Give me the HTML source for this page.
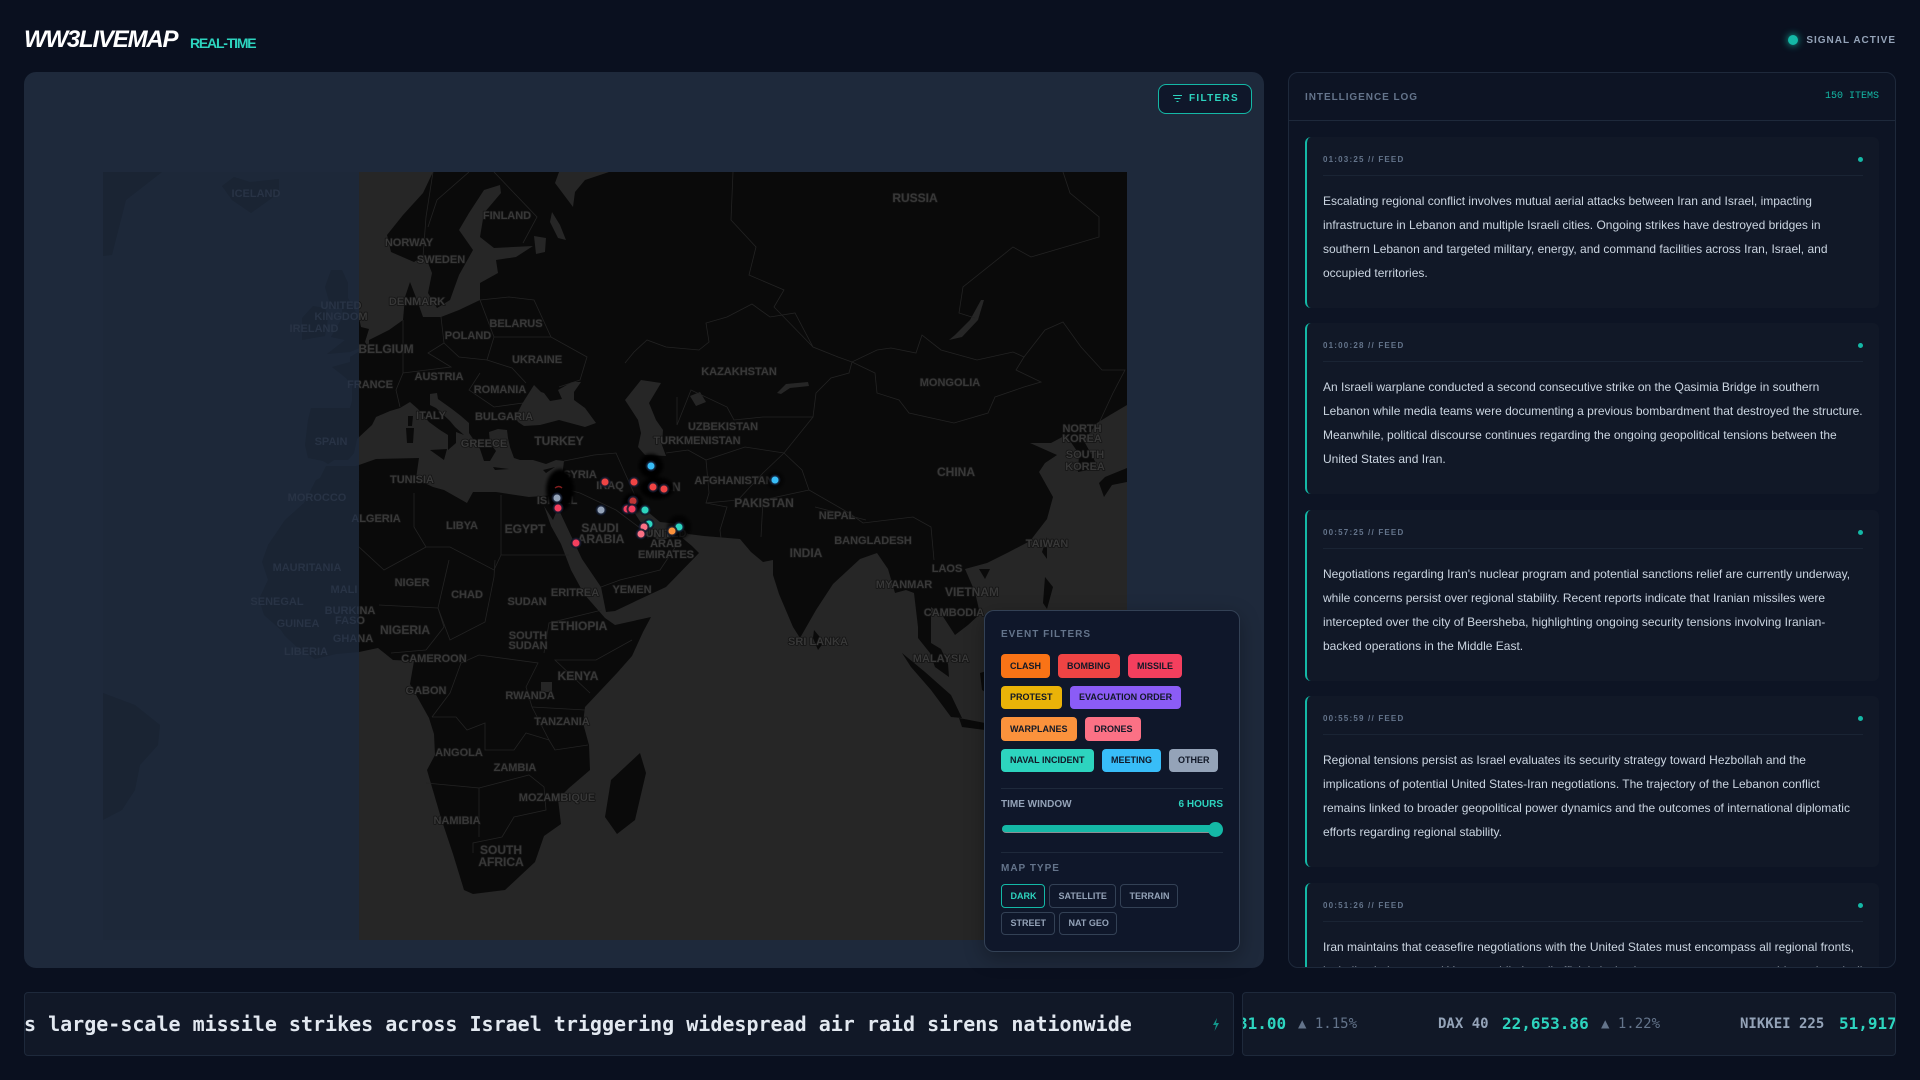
<!DOCTYPE html>
<html lang="en"><head><meta charset="utf-8"><title>WW3LIVEMAP</title>
<style>
*{box-sizing:border-box;margin:0;padding:0}
html,body{width:1920px;height:1080px;overflow:hidden;background:#0a101f;font-family:"Liberation Sans",sans-serif}
.a{position:absolute;white-space:nowrap}
#logo{left:24px;top:26px;font:italic bold 24px/28px "Liberation Sans",sans-serif;letter-spacing:-1.2px;color:#fff}
#rt{left:190px;top:35px;font:bold 14px/16px "Liberation Sans",sans-serif;letter-spacing:-1.2px;color:#2dd4bf}
#dot{left:1788px;top:35px;width:10px;height:10px;border-radius:50%;background:#14b8a6;box-shadow:0 0 8px #14b8a6}
#sig{right:24px;top:35px;font:bold 10px/12px "Liberation Sans",sans-serif;letter-spacing:1px;color:#94a3b8}
#map{left:24px;top:72px;width:1240px;height:896px;background:#1e293b;border-radius:12px;overflow:hidden}
#svg{position:absolute;left:0;top:0}
#fbtn{left:1158px;top:84px;width:94px;height:30px;border:1px solid #14b8a6;border-radius:8px;background:#0f172a;color:#2dd4bf;font:bold 10px/28px "Liberation Sans",sans-serif;letter-spacing:1.3px;padding-left:30px}
#panel{left:984px;top:610px;width:256px;height:342px;background:#0f172a;border:1px solid #334155;border-radius:10px;box-shadow:0 6px 20px rgba(0,0,0,.3)}
.h{font:bold 10px/12px "Liberation Sans",sans-serif;letter-spacing:1px;color:#64748b}
.c{position:absolute;border-radius:4px;font:bold 9px/1 "Liberation Sans",sans-serif;color:#111827;padding-left:9px;white-space:nowrap;display:flex;align-items:center}
.m{position:absolute;border:1px solid #334155;border-radius:4px;font:bold 9px/1 "Liberation Sans",sans-serif;color:#94a3b8;padding-left:8.5px;display:flex;align-items:center}
.d{position:absolute;left:1001px;width:222px;height:1px;background:#1e293b}
#log{left:1288px;top:72px;width:608px;height:896px;background:#0d1424;border:1px solid #1e293b;border-radius:10px;overflow:hidden}
#loghead{position:absolute;left:0;top:0;right:0;height:48px;border-bottom:1px solid #1e293b}
.card{position:absolute;left:16px;width:574px;height:170.5px;background:#111827;border-left:2px solid #14b8a6;border-radius:6px;overflow:hidden}
.meta{position:absolute;left:16px;top:18px;font:bold 8px/10px "Liberation Sans",sans-serif;letter-spacing:1.2px;color:#64748b;white-space:nowrap}
.rule{position:absolute;left:16px;top:38px;width:540px;height:1px;background:#1a2434}
.sd{position:absolute;left:551px;top:20px;width:5px;height:5px;border-radius:50%;background:#14b8a6}
.body{position:absolute;left:16px;top:52px;font:12px/24px "Liberation Sans",sans-serif;color:#cbd5e1;white-space:nowrap}
.box{background:#111827;border:1px solid #1e293b;border-radius:4px;overflow:hidden}
.mono{font-family:"DejaVu Sans Mono",monospace}
</style></head><body>
<div class="a" id="logo">WW3LIVEMAP</div><div class="a" id="rt">REAL-TIME</div>
<div class="a" id="dot"></div><div class="a" id="sig">SIGNAL ACTIVE</div>

<div class="a" id="map"></div>
<svg id="svg" width="1920" height="1080" viewBox="0 0 1920 1080" style="position:absolute;left:0;top:0">
<defs>
<clipPath id="cm"><rect x="359" y="172" width="768" height="768"/></clipPath>
<clipPath id="cl"><rect x="103" y="172" width="256" height="768"/></clipPath>
<filter id="bl" x="-50%" y="-50%" width="200%" height="200%"><feGaussianBlur stdDeviation="1.6"/></filter>
<g id="land">
<path d="M433,172 423,193 403,215 387,235 391,252 414,262 425,255 432,273 428,293 437,308 450,300 459,275 473,250 459,230 469,213 484,190 500,185 501,193 484,213 480,237 494,248 533,246 516,257 496,260 498,273 480,283 480,300 459,310 441,317 423,317 417,300 410,282 405,297 403,320 389,330 369,340 369,346 350,357 350,362 332,367 346,378 352,386 352,401 350,408 327,408 311,408 308,420 305,445 308,458 323,461 328,464 334,460 348,460 354,453 357,439 372,425 376,417 390,411 400,408 410,402 418,409 429,422 440,430 448,435 448,450 456,443 456,432 464,435 455,427 450,421 436,408 430,405 430,394 437,393 438,399 452,409 461,416 469,423 469,433 480,449 484,461 490,461 496,451 490,443 489,432 498,429 507,430 508,438 510,447 514,458 520,460 533,460 546,464 556,460 564,461 563,469 561,480 558,487 554,495 543,496 544,506 553,520 558,508 582,559 601,587 606,612 615,611 638,600 666,587 699,553 692,546 680,536 679,530 674,536 660,541 652,536 651,530 648,539 645,529 632,509 635,505 648,512 660,522 679,524 688,534 704,536 740,539 751,552 763,562 773,560 773,575 779,594 793,627 800,638 816,610 833,584 860,559 877,553 888,569 895,593 906,590 914,593 918,627 918,638 930,653 935,667 949,677 948,664 941,649 931,643 931,607 942,615 955,635 968,625 980,614 975,592 965,569 987,563 1009,552 1030,541 1047,519 1053,497 1039,472 1045,463 1057,455 1030,443 1051,443 1066,435 1079,454 1078,472 1093,469 1096,463 1084,441 1097,423 1110,415 1127,405 1140,400 1140,172Z"/>
<path d="M543,496 529,497 496,492 473,492 467,503 444,490 433,487 416,479 419,458 376,459 356,466 326,466 320,478 316,480 304,503 285,520 268,545 262,562 268,580 259,599 264,615 281,630 285,636 298,648 315,659 336,654 359,652 378,648 393,660 414,661 410,684 429,718 434,734 435,755 427,770 441,818 453,854 464,890 473,894 505,890 535,862 544,836 561,824 558,799 569,788 590,770 589,745 583,723 585,707 617,673 632,656 643,632 651,617 615,625 605,618 584,594 571,570 561,544 551,526 544,506Z"/>
<path d="M342,270 331,270 325,287 331,308 342,308 342,318 331,337 345,340 327,354 350,352 367,345 365,342 369,329 361,327 359,318 348,298 348,283Z"/>
<path d="M325,308 328,318 325,336 302,340 302,318 313,306Z"/>
<path d="M222,186 234,177 250,182 279,179 279,193 251,213 232,200Z"/>
<path d="M103,172 162,172 126,200 112,255 103,256Z"/>
<path d="M430,450 447,449 444,460Z M406,428 414,428 413,443 407,443Z M408,416 413,416 412,426 408,426Z M493,467 509,469 495,470Z M543,470 555,467 546,473Z"/>
<path d="M640,753 646,773 635,820 617,834 605,817 611,780Z"/>
<path d="M814,630 824,642 818,650 813,638Z"/>
<path d="M1105,477 1127,468 1127,482 1112,485 1104,497 1099,483Z"/>
<path d="M1047,537 1047,559 1042,552Z M979,569 990,569 985,579Z M1045,577 1053,587 1047,609 1043,603Z"/>
<path d="M902,653 925,672 951,695 962,718 951,717 931,690 911,667Z M959,718 985,723 985,730 962,727Z M980,673 990,670 990,695 982,690Z"/>
<path d="M103,693 135,705 160,725 158,745 140,765 135,790 122,810 103,820Z"/>
</g>
<g id="seas">
<path d="M515,417 518,412 522,404 534,385 541,392 544,393 550,401 562,399 558,390 572,382 581,382 574,392 574,400 585,408 596,423 585,427 559,420 540,425 524,426 518,422Z"/>
<path d="M641,380 661,383 649,403 656,420 663,430 662,445 666,456 645,455 638,447 641,433 638,420 625,400Z"/>
<path d="M559,172 555,183 573,207 575,192 585,180 609,172Z"/>
<path d="M949,340 962,337 978,320 984,300 981,300 970,320 955,335Z M777,393 786,384 808,382 809,386 790,388 781,394Z M541,682 552,682 552,692 541,692Z M534,236 546,238 545,252 536,254Z M552,212 560,225 566,240 558,238 550,222Z M690,396 700,392 706,402 696,406Z"/>
</g>
</defs>
<g clip-path="url(#cl)"><rect x="103" y="172" width="256" height="768" fill="#1d2839"/>
<use href="#land" fill="#1a2433"/></g>
<g clip-path="url(#cm)"><rect x="359" y="172" width="768" height="768" fill="#262626"/>
<use href="#land" fill="#0a0a0a"/><use href="#seas" fill="#262626"/>
<g fill="none" stroke="#232323" stroke-width=".8">
<path d="M625,363 634,352 647,340 666,347 699,350 709,342 706,323 727,317 752,304 770,317 795,313 813,347 838,357 852,362 877,350 891,348 916,353 922,335 941,350 977,360 1013,352 1024,357 1045,330 1063,322 1081,347 1102,370 1125,370 1113,393 1099,423"/>
<path d="M852,362 875,373 877,393 899,400 909,413 954,423 988,413 995,397 1024,387 1041,382 1016,370 1024,357"/>
<path d="M1063,172 1070,193 1099,217 1099,237 1031,257 1013,247 963,287 959,313 975,318"/>
<path d="M733,172 731,220 756,247 749,275 784,290 774,307 813,347"/>
<path d="M677,397 677,425 691,390 727,407 734,420 763,417 813,417 816,393 831,378 849,373 852,362"/>
<path d="M666,453 688,450 706,460 709,493 706,503 727,507 720,530 721,538"/>
<path d="M706,503 738,500 763,473 784,453 802,470 809,490 849,513 863,523 913,517 931,527 934,560"/>
<path d="M706,460 745,447 784,453 813,417"/><path d="M815,507 866,520"/><path d="M809,490 763,500 761,537"/>
<path d="M403,357 403,373 396,390 400,407"/><path d="M403,357 403,320"/>
<path d="M441,317 444,343 428,353 451,367 403,373"/><path d="M480,300 494,337 487,360 459,357 444,343"/>
<path d="M494,337 551,337 587,357 580,380 559,387"/><path d="M487,360 512,368 526,383"/>
<path d="M480,373 469,390 494,407 523,403"/><path d="M480,300 509,297 534,300 551,337"/>
<path d="M433,172 426,217 423,257"/><path d="M494,172 537,217 523,243"/><path d="M469,172 437,200 428,227"/>
<path d="M501,495 501,555 569,555"/><path d="M414,493 414,527 426,547 450,547 494,570 501,555"/>
<path d="M426,547 384,570 359,547 309,523 309,513 351,493 359,480"/>
<path d="M449,560 438,608 444,627 426,650"/><path d="M495,560 494,577 485,622 450,640 438,608"/>
<path d="M379,605 438,608"/><path d="M426,650 391,653"/><path d="M602,610 549,623 544,653"/>
<path d="M432,717 456,717 467,730 485,723 485,750 514,750 526,733 549,740 532,707 526,687 538,663 479,655 461,663 450,693 432,717"/>
<path d="M426,783 479,788 479,837"/><path d="M479,788 529,775 544,787 546,810 514,817 502,837 473,843 473,853"/>
<path d="M532,707 585,710"/><path d="M549,740 555,750 588,745"/><path d="M590,693 555,660 596,660 632,640"/>
<path d="M564,461 594,455 616,453 637,500"/><path d="M580,493 616,510 640,528"/><path d="M601,587 620,580 660,570 680,540"/>
<path d="M558,487 580,493"/>
</g></g>
<g font-family="'Liberation Sans',sans-serif" font-weight="700" font-size="11" text-anchor="middle">
<g clip-path="url(#cl)" fill="#283345">
<text x="256" y="197">ICELAND</text><text x="341" y="309">UNITED</text><text x="341" y="320">KINGDOM</text><text x="314" y="332">IRELAND</text><text x="386" y="353">BELGIUM</text><text x="370" y="388">FRANCE</text><text x="331" y="445">SPAIN</text><text x="317" y="501">MOROCCO</text><text x="376" y="522">ALGERIA</text><text x="307" y="571">MAURITANIA</text><text x="344" y="593">MALI</text><text x="277" y="605">SENEGAL</text><text x="350" y="614">BURKINA</text><text x="350" y="624">FASO</text><text x="298" y="627">GUINEA</text><text x="353" y="642">GHANA</text><text x="306" y="655">LIBERIA</text>
</g>
<g clip-path="url(#cm)" fill="#383838" stroke="#141414" stroke-width="1.6" paint-order="stroke" stroke-linejoin="round">
<text x="915" y="202" font-size="12">RUSSIA</text><text x="507" y="219">FINLAND</text><text x="409" y="246">NORWAY</text><text x="441" y="263">SWEDEN</text><text x="417" y="305">DENMARK</text><text x="341" y="309">UNITED</text><text x="341" y="320">KINGDOM</text><text x="468" y="339">POLAND</text><text x="516" y="327">BELARUS</text><text x="386" y="353" font-size="12">BELGIUM</text><text x="537" y="363">UKRAINE</text><text x="439" y="380">AUSTRIA</text><text x="370" y="388">FRANCE</text><text x="500" y="393">ROMANIA</text><text x="431" y="419">ITALY</text><text x="504" y="420">BULGARIA</text><text x="484" y="447">GREECE</text><text x="559" y="445" font-size="12">TURKEY</text><text x="580" y="478">SYRIA</text><text x="610" y="489">IRAQ</text><text x="412" y="483">TUNISIA</text><text x="557" y="504">ISRAEL</text><text x="376" y="522">ALGERIA</text><text x="462" y="529">LIBYA</text><text x="525" y="533" font-size="12">EGYPT</text><text x="600" y="532" font-size="12">SAUDI</text><text x="601" y="543" font-size="12">ARABIA</text><text x="739" y="375">KAZAKHSTAN</text><text x="950" y="386">MONGOLIA</text><text x="723" y="430">UZBEKISTAN</text><text x="697" y="444">TURKMENISTAN</text><text x="1082" y="432">NORTH</text><text x="1082" y="442">KOREA</text><text x="1085" y="458">SOUTH</text><text x="1085" y="470">KOREA</text><text x="956" y="476" font-size="12">CHINA</text><text x="734" y="484">AFGHANISTAN</text><text x="666" y="491" font-size="12">IRAN</text><text x="764" y="507" font-size="12">PAKISTAN</text><text x="837" y="519">NEPAL</text><text x="873" y="544">BANGLADESH</text><text x="1047" y="547">TAIWAN</text><text x="806" y="557" font-size="12">INDIA</text><text x="666" y="537">UNITED</text><text x="666" y="547">ARAB</text><text x="666" y="558">EMIRATES</text><text x="947" y="572">LAOS</text><text x="412" y="586">NIGER</text><text x="904" y="588">MYANMAR</text><text x="467" y="598">CHAD</text><text x="575" y="596">ERITREA</text><text x="632" y="593">YEMEN</text><text x="972" y="596" font-size="12">VIETNAM</text><text x="527" y="605">SUDAN</text><text x="350" y="614">BURKINA</text><text x="350" y="624">FASO</text><text x="954" y="616">CAMBODIA</text><text x="579" y="630" font-size="12">ETHIOPIA</text><text x="405" y="634" font-size="12">NIGERIA</text><text x="528" y="639">SOUTH</text><text x="528" y="649">SUDAN</text><text x="353" y="642">GHANA</text><text x="818" y="645">SRI LANKA</text><text x="434" y="662">CAMEROON</text><text x="941" y="662">MALAYSIA</text><text x="578" y="680" font-size="12">KENYA</text><text x="426" y="694">GABON</text><text x="530" y="699">RWANDA</text><text x="562" y="725">TANZANIA</text><text x="459" y="756">ANGOLA</text><text x="515" y="771">ZAMBIA</text><text x="557" y="801">MOZAMBIQUE</text><text x="457" y="824">NAMIBIA</text><text x="501" y="854" font-size="12">SOUTH</text><text x="501" y="866" font-size="12">AFRICA</text>
</g></g>
<g filter="url(#bl)" fill="#000">
<ellipse cx="560" cy="490" rx="14" ry="21" /><circle cx="651" cy="466" r="12"/><ellipse cx="657" cy="488" rx="17" ry="11"/><circle cx="633" cy="503" r="10"/><circle cx="679" cy="527" r="12" fill-opacity=".7"/><circle cx="775" cy="480" r="9" fill-opacity=".5"/>
</g>
<path d="M555,488q4,-3 7,0" stroke="#7f1d1d" stroke-width="1.4" fill="none"/>
<g stroke="#0f172a" stroke-opacity=".85" stroke-width="2">
<circle cx="633" cy="501" r="4.5" fill="#ef4444" fill-opacity=".8"/><circle cx="627" cy="509" r="4.5" fill="#f43f5e"/>
<circle cx="605" cy="482" r="4.5" fill="#ef4444"/><circle cx="634" cy="482" r="4.5" fill="#ef4444"/><circle cx="653" cy="487" r="4.5" fill="#ef4444"/><circle cx="664" cy="489" r="4.5" fill="#ef4444"/>
<circle cx="651" cy="466" r="4.5" fill="#38bdf8"/><circle cx="775" cy="480" r="4.5" fill="#38bdf8"/>
<circle cx="557" cy="498" r="4.5" fill="#94a3b8"/><circle cx="601" cy="510" r="4.5" fill="#94a3b8"/>
<circle cx="558" cy="508" r="4.5" fill="#f43f5e"/><circle cx="576" cy="543" r="4.5" fill="#f43f5e"/><circle cx="632" cy="509" r="4.5" fill="#f43f5e"/>
<circle cx="645" cy="510" r="4.5" fill="#2dd4bf"/><circle cx="649" cy="524" r="4.5" fill="#2dd4bf"/><circle cx="679" cy="527" r="4.5" fill="#2dd4bf"/>
<circle cx="644" cy="527" r="4.5" fill="#fb7185"/><circle cx="641" cy="534" r="4.5" fill="#fb7185"/><circle cx="672" cy="531" r="4.5" fill="#fb923c"/>
</g>
</svg>

<div class="a" id="fbtn">FILTERS</div>
<svg class="a" style="left:1172px;top:94px" width="11" height="9" viewBox="0 0 11 9"><path d="M1,1.5H10M2.5,4.5H8.5M4.5,7.5H6.5" stroke="#2dd4bf" stroke-width="1.1" fill="none"/></svg>

<div class="a" id="panel"></div>
<div class="a h" style="left:1001px;top:629px">EVENT FILTERS</div>
<div class="c" style="left:1001px;top:654px;width:49px;height:24px;background:#f97316">CLASH</div>
<div class="c" style="left:1058px;top:654px;width:62px;height:24px;background:#ef4444">BOMBING</div>
<div class="c" style="left:1128px;top:654px;width:54px;height:24px;background:#f43f5e">MISSILE</div>
<div class="c" style="left:1001px;top:686px;width:61px;height:23px;background:#eab308">PROTEST</div>
<div class="c" style="left:1070px;top:686px;width:111px;height:23px;background:#8b5cf6">EVACUATION ORDER</div>
<div class="c" style="left:1001px;top:717px;width:76px;height:24px;background:#fb923c">WARPLANES</div>
<div class="c" style="left:1085px;top:717px;width:56px;height:24px;background:#fb7185">DRONES</div>
<div class="c" style="left:1001px;top:749px;width:93px;height:23px;background:#2dd4bf">NAVAL INCIDENT</div>
<div class="c" style="left:1102px;top:749px;width:59px;height:23px;background:#38bdf8">MEETING</div>
<div class="c" style="left:1169px;top:749px;width:49px;height:23px;background:#94a3b8">OTHER</div>
<div class="d" style="top:788px"></div>
<div class="a" style="left:1001px;top:799px;font:bold 10px/12px 'Liberation Sans',sans-serif;color:#94a3b8">TIME WINDOW</div>
<div class="a" style="right:697px;top:799px;font:bold 10px/12px 'Liberation Sans',sans-serif;color:#2dd4bf">6 HOURS</div>
<div class="a" style="left:1002px;top:825px;width:218px;height:8px;border-radius:4px;background:#14b8a6;border-bottom:1px solid #8b8f94"></div>
<div class="a" style="left:1208px;top:822px;width:15px;height:15px;border-radius:50%;background:#14b8a6"></div>
<div class="d" style="top:852px"></div>
<div class="a h" style="left:1001px;top:863px">MAP TYPE</div>
<div class="m" style="left:1001px;top:884px;width:44px;height:24px;border-color:#14b8a6;color:#2dd4bf">DARK</div>
<div class="m" style="left:1049px;top:884px;width:67px;height:24px">SATELLITE</div>
<div class="m" style="left:1120px;top:884px;width:58px;height:24px">TERRAIN</div>
<div class="m" style="left:1001px;top:912px;width:54px;height:23px">STREET</div>
<div class="m" style="left:1059px;top:912px;width:58px;height:23px">NAT GEO</div>

<div class="a" id="log">
<div id="loghead"></div>
<div class="a h" style="left:16px;top:19px;letter-spacing:.95px">INTELLIGENCE LOG</div>
<div class="a" style="right:16px;top:18px;font:10px/12px 'Liberation Mono',monospace;color:#14b8a6">150 ITEMS</div>
<div class="card" style="top:64px"><div class="meta">01:03:25 // FEED</div><div class="sd"></div><div class="rule"></div>
<div class="body">Escalating regional conflict involves mutual aerial attacks between Iran and Israel, impacting<br>infrastructure in Lebanon and multiple Israeli cities. Ongoing strikes have destroyed bridges in<br>southern Lebanon and targeted military, energy, and command facilities across Iran, Israel, and<br>occupied territories.</div></div>
<div class="card" style="top:250px"><div class="meta">01:00:28 // FEED</div><div class="sd"></div><div class="rule"></div>
<div class="body">An Israeli warplane conducted a second consecutive strike on the Qasimia Bridge in southern<br>Lebanon while media teams were documenting a previous bombardment that destroyed the structure.<br>Meanwhile, political discourse continues regarding the ongoing geopolitical tensions between the<br>United States and Iran.</div></div>
<div class="card" style="top:437px"><div class="meta">00:57:25 // FEED</div><div class="sd"></div><div class="rule"></div>
<div class="body">Negotiations regarding Iran's nuclear program and potential sanctions relief are currently underway,<br>while concerns persist over regional stability. Recent reports indicate that Iranian missiles were<br>intercepted over the city of Beersheba, highlighting ongoing security tensions involving Iranian-<br>backed operations in the Middle East.</div></div>
<div class="card" style="top:623px"><div class="meta">00:55:59 // FEED</div><div class="sd"></div><div class="rule"></div>
<div class="body">Regional tensions persist as Israel evaluates its security strategy toward Hezbollah and the<br>implications of potential United States-Iran negotiations. The trajectory of the Lebanon conflict<br>remains linked to broader geopolitical power dynamics and the outcomes of international diplomatic<br>efforts regarding regional stability.</div></div>
<div class="card" style="top:810px"><div class="meta">00:51:26 // FEED</div><div class="sd"></div><div class="rule"></div>
<div class="body">Iran maintains that ceasefire negotiations with the United States must encompass all regional fronts,<br>including Lebanon and Yemen, while Israeli officials insist that any agreement must address the missile</div></div>
</div>

<div class="a box" style="left:24px;top:992px;width:1210px;height:64px">
<div class="a mono" style="left:-1px;top:19px;font-size:20px;line-height:24px;font-weight:700;color:#e2e8f0">s large-scale missile strikes across Israel triggering widespread air raid sirens nationwide</div>
<svg class="a" style="left:1186px;top:24px" width="10" height="15" viewBox="0 0 10 15"><path d="M6,1 2,8H5L3.5,14 8,6H5Z" fill="#14b8a6" fill-opacity=".8"/></svg>
</div>
<div class="a box mono" style="left:1242px;top:992px;width:654px;height:64px;color:#94a3b8">
<div class="a" style="left:-5px;top:21px;font-size:16px;line-height:20px;font-weight:700;color:#2dd4bf">31.00</div>
<div class="a" style="left:55px;top:22px;font-size:14px;line-height:18px;color:#64748b">▲ 1.15%</div>
<div class="a" style="left:195px;top:22px;font-size:14px;line-height:18px;font-weight:700">DAX 40</div>
<div class="a" style="left:259px;top:21px;font-size:16px;line-height:20px;font-weight:700;color:#2dd4bf">22,653.86</div>
<div class="a" style="left:358px;top:22px;font-size:14px;line-height:18px;color:#64748b">▲ 1.22%</div>
<div class="a" style="left:497px;top:22px;font-size:14px;line-height:18px;font-weight:700">NIKKEI 225</div>
<div class="a" style="left:596px;top:21px;font-size:16px;line-height:20px;font-weight:700;color:#2dd4bf">51,917.50</div>
</div>
</body></html>
